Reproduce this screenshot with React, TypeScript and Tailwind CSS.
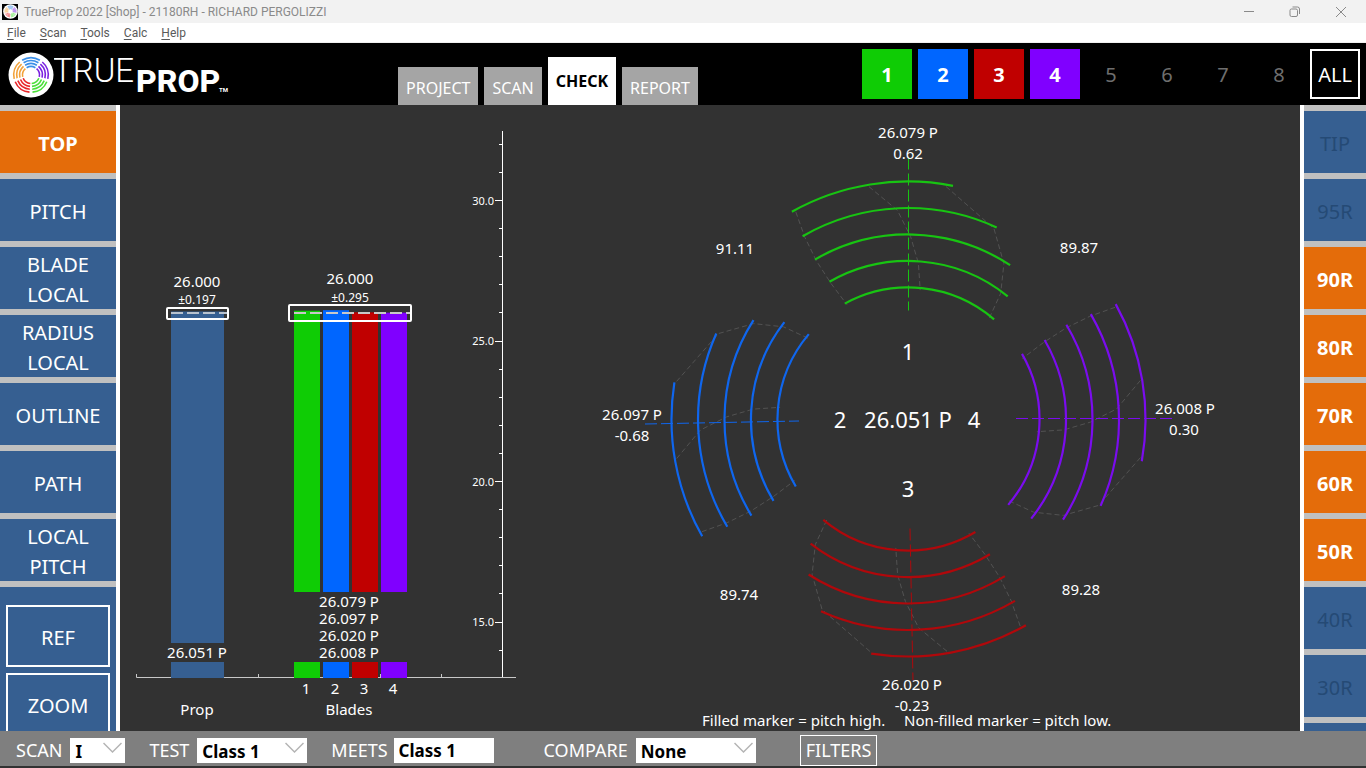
import * as React from 'react';
import clsx from 'clsx';

const FONT = "font-['Noto_Sans','Open_Sans',sans-serif]";

const BLADE_COLORS = ['#0fcc05', '#0066ff', '#c00000', '#8000ff'];

const menus = ['File', 'Scan', 'Tools', 'Calc', 'Help'];
const tabs = ['PROJECT', 'SCAN', 'CHECK', 'REPORT'];
const views = ['TOP', 'PITCH', 'BLADE LOCAL', 'RADIUS LOCAL', 'OUTLINE', 'PATH', 'LOCAL PITCH'];

const radii = [
    { name: 'TIP', active: false },
    { name: '95R', active: false },
    { name: '90R', active: true },
    { name: '80R', active: true },
    { name: '70R', active: true },
    { name: '60R', active: true },
    { name: '50R', active: true },
    { name: '40R', active: false },
    { name: '30R', active: false },
];

const bladeButtons = [
    { name: '1', className: 'bg-[#0fcc05] font-bold text-white' },
    { name: '2', className: 'bg-[#0066ff] font-bold text-white' },
    { name: '3', className: 'bg-[#c00000] font-bold text-white' },
    { name: '4', className: 'bg-[#8000ff] font-bold text-white' },
    { name: '5', className: 'text-[#6e6e6e]' },
    { name: '6', className: 'text-[#6e6e6e]' },
    { name: '7', className: 'text-[#6e6e6e]' },
    { name: '8', className: 'text-[#6e6e6e]' },
    { name: 'ALL', className: 'border-2 border-white text-white' },
];

// Point at a given radius, angle in degrees clockwise from straight up
const polar = (r: number, deg: number) => {
    const a = (deg * Math.PI) / 180;
    return `${(r * Math.sin(a)).toFixed(1)} ${(-r * Math.cos(a)).toFixed(1)}`;
};

const arc = (r: number, from: number, to: number) => `M${polar(r, from)}A${r} ${r} 0 0 1 ${polar(r, to)}`;

const LogoMark = ({ className }: { className?: string }) => {
    const sectors = ['#3b8fe8', '#7a22e0', '#4be03a', '#e8262a', '#f2a23a'];
    return (
        <svg viewBox="-23 -23 46 46" className={className} aria-hidden="true">
            <circle r="22.5" fill="#fff" />
            {sectors.map((color, i) =>
                [8.5, 11.4, 14.3, 17.2].map(r => (
                    <path key={`${i}-${r}`} d={arc(r, i * 72 - 31, i * 72 + 31)} fill="none" stroke={color} strokeWidth="1.6" />
                ))
            )}
        </svg>
    );
};

const TitleBar = () => (
    <div className="flex h-[23px] shrink-0 items-center bg-[#f2f2f2] text-[#8a8a8a]">
        <span className="ml-0.5 flex h-4 w-4 items-center justify-center bg-black">
            <LogoMark className="h-[15px] w-[15px]" />
        </span>
        <span className="ml-1.5 font-['Roboto','Noto_Sans',sans-serif] text-[12px]">TrueProp 2022 [Shop] - 21180RH - RICHARD PERGOLIZZI</span>
        <div className="ml-auto flex h-full pr-0.5">
            <button aria-label="Minimize" className="flex w-[46px] items-center justify-center">
                <svg width="12" height="12" viewBox="0 0 12 12" stroke="currentColor"><path d="M1 5.5h10" /></svg>
            </button>
            <button aria-label="Restore" className="flex w-[46px] items-center justify-center">
                <svg width="12" height="12" viewBox="0 0 12 12" fill="none" stroke="currentColor">
                    <rect x="1" y="3" width="7.5" height="7.5" rx="1.5" />
                    <path d="M3.5 1h5a2 2 0 0 1 2 2v5" />
                </svg>
            </button>
            <button aria-label="Close" className="flex w-[46px] items-center justify-center">
                <svg width="12" height="12" viewBox="0 0 12 12" stroke="currentColor"><path d="M1 1l10 10M11 1L1 11" /></svg>
            </button>
        </div>
    </div>
);

const MenuBar = () => (
    <div className="flex h-5 shrink-0 items-center gap-[14px] border-b border-[#f0f0f0] bg-white pl-[7px] font-['Roboto','Noto_Sans',sans-serif] text-[12px] text-[#5a5a5a]">
        {menus.map(menu => (
            <button key={menu}>
                <span className="underline underline-offset-2">{menu[0]}</span>{menu.slice(1)}
            </button>
        ))}
    </div>
);

const Header = () => {
    const [tab, setTab] = React.useState('CHECK');
    return (
        <header className="flex h-[62px] shrink-0 bg-black">
            <div className="flex w-[398px] shrink-0 items-center pt-0.5 pl-2">
                <LogoMark className="h-[46px] w-[46px]" />
                <svg width="180" height="50" viewBox="0 0 180 50" fill="#fff" fontFamily="Roboto, sans-serif">
                    <text x="-1" y="32" fontSize="33" fontWeight="300">TRUE</text>
                    <text x="82" y="42" fontSize="32" fontWeight="800">PROP</text>
                    <text x="165" y="42" fontSize="6" fontWeight="700">TM</text>
                </svg>
            </div>
            <nav className="flex items-end gap-1.5">
                {tabs.map(name => (
                    <button
                        key={name}
                        onClick={() => setTab(name)}
                        className={clsx(
                            'px-2 text-[16px]',
                            name === tab ? 'h-12 bg-white font-bold text-black' : 'h-[38px] bg-[#a5a5a5] pt-1 text-white'
                        )}
                    >
                        {name}
                    </button>
                ))}
            </nav>
            <div className="ml-auto flex items-center gap-1.5 pr-1.5">
                {bladeButtons.map(blade => (
                    <button key={blade.name} className={clsx('h-[50px] w-[50px] pt-0.5 text-[20px]', blade.className)}>
                        {blade.name}
                    </button>
                ))}
            </div>
        </header>
    );
};

const ViewPanel = () => {
    const [view, setView] = React.useState('TOP');
    return (
        <aside className="flex w-[120px] shrink-0 flex-col overflow-hidden border-r-4 border-white bg-[#c0c0c0] text-[20px] leading-[30px] text-white">
            <div className="flex shrink-0 flex-col gap-1.5 py-1.5">
                {views.map(name => (
                    <button
                        key={name}
                        onClick={() => setView(name)}
                        className={clsx('h-[62px] px-3 pt-[3px]', name === view ? 'bg-[#e46c0a] font-bold' : 'bg-[#365f91]')}
                    >
                        {name}
                    </button>
                ))}
            </div>
            <div className="flex grow flex-col gap-1.5 bg-[#365f91] px-1.5 pt-[18px]">
                <button className="h-[62px] shrink-0 border-2 border-white pt-[3px]">REF</button>
                <button className="h-[62px] shrink-0 border-2 border-white pt-[3px]">ZOOM</button>
            </div>
        </aside>
    );
};

const RadiusPanel = () => (
    <aside className="flex w-[66px] shrink-0 flex-col gap-1.5 overflow-hidden border-l-4 border-white bg-[#c0c0c0] pt-1.5 text-[20px]">
        {radii.map(radius => (
            <button
                key={radius.name}
                className={clsx(
                    'h-[62px] shrink-0 pt-[3px]',
                    radius.active ? 'bg-[#e46c0a] font-bold text-white' : 'bg-[#365f91] text-[#254a75]'
                )}
            >
                {radius.name}
            </button>
        ))}
        <div className="grow bg-[#365f91]" />
    </aside>
);

const pitchY = (pitch: number) => 95.5 + (30 - pitch) * 28.1;

const PitchBars = () => {
    const pitches = [26.079, 26.097, 26.02, 26.008];
    const ticks = Array.from({ length: 19 }, (_, i) => 14 + i);
    return (
        <svg viewBox="0 0 420 626" className="h-full w-[420px] shrink-0" fill="#fff" fontSize="15" textAnchor="middle">
            {/* Pitch scale */}
            <path d="M382.5 26V572" stroke="#fff" />
            {ticks.map(t => (
                <g key={t}>
                    <path d={`M${t % 5 ? 379 : 375} ${Math.floor(pitchY(t)) + 0.5}H382`} stroke="#fff" />
                    {t % 5 === 0 && <text x="374" y={pitchY(t) + 4} fontSize="11" textAnchor="end">{t.toFixed(1)}</text>}
                </g>
            ))}

            <path d="M16.5 569v3.5H396M138.5 569v3M260.5 569v3M321.5 569v3" fill="none" stroke="#c8c8c8" />

            {/* Whole prop */}
            <rect x="51" y={pitchY(26.051)} width="53" height={538 - pitchY(26.051)} fill="#365f91" />
            <rect x="51" y="557" width="53" height="16" fill="#365f91" />
            <rect x="47" y="203" width="61" height="11" rx="1" fill="none" stroke="#fff" strokeWidth="2" />
            <path d="M51 208H107" stroke="#b8c2ce" strokeWidth="2" strokeDasharray="12 4" />
            <text x="77" y="182">26.000</text>
            <text x="77" y="199" fontSize="12">±0.197</text>
            <text x="77" y="553">26.051 P</text>
            <text x="77" y="610">Prop</text>

            {/* Individual blades */}
            {pitches.map((pitch, i) => (
                <g key={i}>
                    <rect x={174 + i * 29} y={pitchY(pitch)} width="26" height={487 - pitchY(pitch)} fill={BLADE_COLORS[i]} />
                    <rect x={174 + i * 29} y="557" width="26" height="16" fill={BLADE_COLORS[i]} />
                    <text x="229" y={502 + i * 17}>{pitch.toFixed(3)} P</text>
                    <text x={186 + i * 29} y="589">{i + 1}</text>
                </g>
            ))}
            <rect x="169" y="200" width="122" height="16" rx="1" fill="none" stroke="#fff" strokeWidth="2" />
            <path d="M174 208H290" stroke="#c8c8c8" strokeWidth="2" strokeDasharray="12 4" />
            <text x="230" y="179">26.000</text>
            <text x="230" y="197" fontSize="12">±0.295</text>
            <text x="229" y="610">Blades</text>
        </svg>
    );
};

// Measured radii from 90R down to 50R
const RINGS = [238, 211.5, 185, 158.5, 132];

// Start and end angle of every ring, relative to the blade's own direction
const blades = [
    {
        turn: 0, offset: '0 0', color: '#18c412', line: 'M0.5 -262V-109',
        spans: [[-29.2, 10.9], [-29.9, 24.8], [-30.2, 33.5], [-29.7, 39], [-28.6, 40.7]],
    },
    {
        turn: 270, offset: '1.5 0', color: '#0f66ee', line: 'M-263 4.5L-109 1.5',
        spans: [[-29.4, 9], [-30.5, 24], [-31.3, 32.5], [-30.9, 37.9], [-30.5, 40.3]],
    },
    {
        turn: 180, offset: '0 -1', color: '#b0080b', line: 'M2 109L5 261',
        spans: [[-29.7, 8.9], [-30.4, 24.3], [-31.6, 32.5], [-31.1, 37.9], [-30.7, 39.9]],
    },
    {
        turn: 90, offset: '-0.5 0', color: '#7a0cee', line: 'M108 -1H264',
        spans: [[-29, 10.1], [-29.9, 24.1], [-30.8, 32.8], [-30.1, 38.7], [-29.8, 40.3]],
    },
];

const outline = [
    [-28.4, -29.5, -30, -29.5, -28],
    [-9.5, -2.9, 0.8, 3.8, 5.4],
    [9.3, 24.2, 31.6, 36.3, 38.7],
];

const outlinePath = (angles: number[], turn: number) =>
    'M' + angles.map((deg, i) => polar(RINGS[i] - 2, deg + turn)).join('L');

const labels = [
    { x: 0, y: -282, text: '26.079 P' },
    { x: 0, y: -261, text: '0.62' },
    { x: -276, y: 0, text: '26.097 P' },
    { x: -276, y: 21, text: '-0.68' },
    { x: 4, y: 270, text: '26.020 P' },
    { x: 4, y: 291, text: '-0.23' },
    { x: 277, y: -6, text: '26.008 P' },
    { x: 276, y: 15, text: '0.30' },
    { x: -173, y: -166, text: '91.11' },
    { x: 171, y: -167, text: '89.87' },
    { x: -169, y: 180, text: '89.74' },
    { x: 173, y: 175, text: '89.28' },
];

const PropTopView = () => (
    <svg viewBox="-368 -314.5 760 626" className="h-full min-w-0 flex-1" fill="#fff" fontSize="15" textAnchor="middle">
        {blades.map(blade => (
            <g key={blade.turn} fill="none">
                <g transform={`translate(${blade.offset})`}>
                    {outline.map((angles, i) => (
                        <path key={i} d={outlinePath(angles, blade.turn)} stroke="#525252" strokeDasharray="5 3" />
                    ))}
                    {blade.spans.map(([from, to], i) => (
                        <path key={i} d={arc(RINGS[i], blade.turn + from, blade.turn + to)} stroke={blade.color} strokeWidth="2.2" />
                    ))}
                </g>
                <path d={blade.line} stroke={blade.color} strokeDasharray="12 4" />
            </g>
        ))}
        {labels.map(label => (
            <text key={label.text} x={label.x} y={label.y}>{label.text}</text>
        ))}
        <g fontSize="22">
            <text x="0" y="-60">1</text>
            <text x="-68" y="8">2</text>
            <text x="0" y="77">3</text>
            <text x="66" y="8">4</text>
            <text x="0" y="8">26.051 P</text>
        </g>
        <g textAnchor="start">
            <text x="-206" y="306">Filled marker = pitch high.</text>
            <text x="-4" y="306">Non-filled marker = pitch low.</text>
        </g>
    </svg>
);

interface PickerProps {
    id: string;
    label: string;
    options: string[];
    width: string;
}

const Picker: React.FC<PickerProps> = ({ id, label, options, width }) => (
    <div className="flex items-center gap-2">
        <label htmlFor={id}>{label}</label>
        <div className={clsx('relative h-[25px]', width)}>
            <select id={id} className="h-full w-full appearance-none bg-white pt-0.5 pl-[5px] text-[17px] leading-[23px] font-bold text-black outline-none">
                {options.map(option => <option key={option}>{option}</option>)}
            </select>
            <svg className="pointer-events-none absolute top-1 right-[3px]" width="19" height="12" viewBox="0 0 19 12" fill="none" stroke="#b4b4b4" strokeWidth="1.5">
                <path d="M0.5 1L9.5 10L18.5 1" />
            </svg>
        </div>
    </div>
);

const BottomBar = () => (
    <footer className="flex h-[37px] shrink-0 items-center border-b-2 border-[#323232] bg-[#7f7f7f] pt-[3px] pl-4 text-[18px] text-white">
        <Picker id="scan" label="SCAN" options={['I', 'II']} width="w-[55px]" />
        <div className="ml-6">
            <Picker id="test" label="TEST" options={['Class 1', 'Class 2', 'Class 3']} width="w-[110px]" />
        </div>
        <div className="ml-6 flex items-center gap-1.5">
            <label htmlFor="meets">MEETS</label>
            <input id="meets" readOnly defaultValue="Class 1" className="h-[25px] w-[100px] bg-white pt-0.5 pl-[5px] text-[17px] font-bold text-black outline-none" />
        </div>
        <div className="ml-[50px]">
            <Picker id="compare" label="COMPARE" options={['None', 'Scan I', 'Scan II']} width="w-[120px]" />
        </div>
        <button className="ml-11 h-[31px] border border-white px-[5px]">FILTERS</button>
    </footer>
);

export default function App() {
    return (
        <div className={clsx('flex h-screen flex-col overflow-hidden bg-[#323232]', FONT)}>
            <TitleBar />
            <MenuBar />
            <Header />
            <div className="flex min-h-0 flex-1">
                <ViewPanel />
                <main className="flex min-w-0 flex-1">
                    <PitchBars />
                    <PropTopView />
                </main>
                <RadiusPanel />
            </div>
            <BottomBar />
        </div>
    );
}
